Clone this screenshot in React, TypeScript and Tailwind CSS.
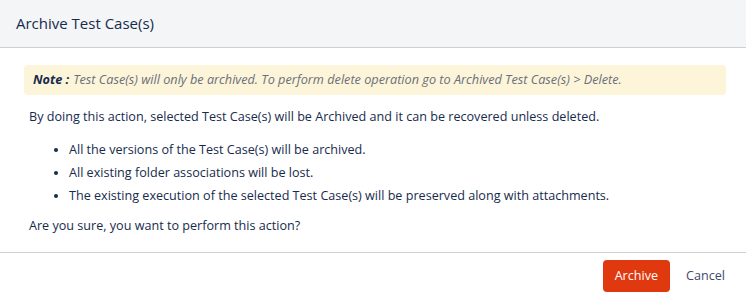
import React from "react";

export default function App() {
  const font = { fontFamily: '"Open Sans", "Noto Sans", sans-serif' };
  return (
    <div className="w-[746px] h-[296px] bg-white text-[#172b4d] flex flex-col overflow-hidden" style={font}>
      <div className="h-[48px] shrink-0 bg-[#f4f5f7] border-b border-[#cfcfcf] flex items-center px-4">
        <span className="text-[15px] text-[#172b4d]">Archive Test Case(s)</span>
      </div>
      <div className="flex-1 pl-6 pr-5 pt-[17px]">
        <div className="h-[30px] rounded bg-[#fdf5d9] flex items-center px-[9px] text-[12.7px] italic">
          <span className="font-bold text-[#172b4d]">Note :</span>
          <span className="ml-1 text-[#6b6f7a]">Test Case(s) will only be archived. To perform delete operation go to Archived Test Case(s) &gt; Delete.</span>
        </div>
        <p className="mt-[12px] ml-[5px] text-[12.6px] leading-[20px]">
          By doing this action, selected Test Case(s) will be Archived and it can be recovered unless deleted.
        </p>
        <ul className="mt-[13px] ml-[45px] list-disc text-[12.6px] leading-[20px] flex flex-col gap-[3px]">
          <li>All the versions of the Test Case(s) will be archived.</li>
          <li>All existing folder associations will be lost.</li>
          <li>The existing execution of the selected Test Case(s) will be preserved along with attachments.</li>
        </ul>
        <p className="mt-[10px] ml-[5px] text-[12.6px] leading-[20px]">Are you sure, you want to perform this action?</p>
      </div>
      <div className="h-[44px] shrink-0 border-t border-[#d0d0d0] flex items-center justify-end pr-[21px] pt-[3px]">
        <button className="h-[32px] px-[12px] rounded bg-[#e0380f] text-white text-[12.6px]">Archive</button>
        <button className="ml-[16px] text-[12.6px] text-[#3d4b6b]">Cancel</button>
      </div>
    </div>
  );
}
